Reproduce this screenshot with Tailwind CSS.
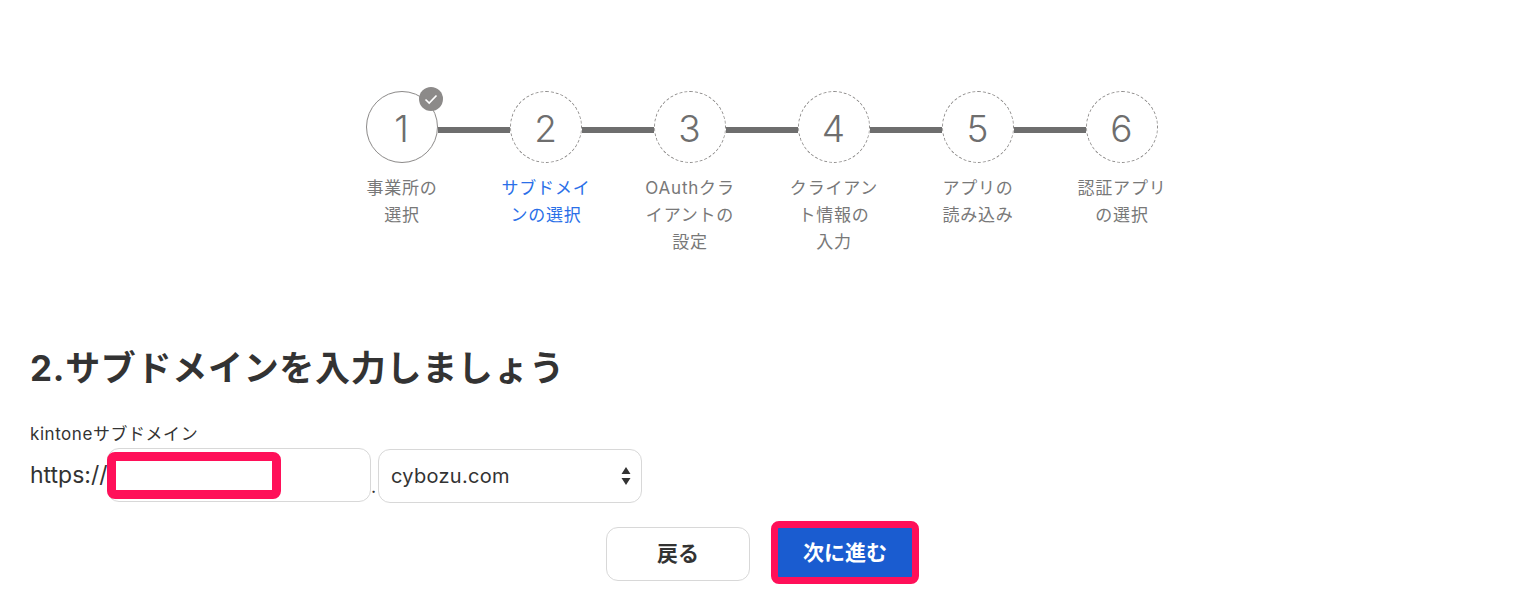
<!DOCTYPE html>
<html lang="ja">
<head>
    <meta charset="UTF-8">
    <title>サブドメインの選択</title>
    <script src="https://cdn.jsdelivr.net/npm/@tailwindcss/browser@4"></script>
</head>
<body class="bg-white h-[611px] overflow-hidden font-['Inter','Noto_Sans_CJK_JP',sans-serif]">
    <!-- ステップ -->
    <div class="pt-[91px] pl-[366px]">
        <div class="flex items-center text-[37px] text-[#6e6e6e]">
            <div class="relative w-[72px] h-[72px] pt-[4px] pr-[1px] rounded-full border border-[#8c8a89] flex items-center justify-center font-light">
                1
                <div class="absolute -top-[5px] -right-[6px] w-6 h-6 rounded-full bg-[#8c8a89] flex items-center justify-center">
                    <svg width="14" height="14" viewBox="0 0 14 14" fill="none" stroke="white" stroke-width="1.7"><path d="M1.5 7.5 5.2 11 12.5 3.5"/></svg>
                </div>
            </div>
            <div class="w-[72px] h-[6px] mt-[6px] bg-[#6e6e6e]"></div>
            <div class="w-[72px] h-[72px] pt-[4px] pr-[1px] rounded-full border border-dashed border-[#8c8a89] flex items-center justify-center font-light">2</div>
            <div class="w-[72px] h-[6px] mt-[6px] bg-[#6e6e6e]"></div>
            <div class="w-[72px] h-[72px] pt-[4px] pr-[1px] rounded-full border border-dashed border-[#8c8a89] flex items-center justify-center font-light">3</div>
            <div class="w-[72px] h-[6px] mt-[6px] bg-[#6e6e6e]"></div>
            <div class="w-[72px] h-[72px] pt-[4px] pr-[1px] rounded-full border border-dashed border-[#8c8a89] flex items-center justify-center font-light">4</div>
            <div class="w-[72px] h-[6px] mt-[6px] bg-[#6e6e6e]"></div>
            <div class="w-[72px] h-[72px] pt-[4px] pr-[1px] rounded-full border border-dashed border-[#8c8a89] flex items-center justify-center font-light">5</div>
            <div class="w-[72px] h-[6px] mt-[6px] bg-[#6e6e6e]"></div>
            <div class="w-[72px] h-[72px] pt-[4px] pr-[1px] rounded-full border border-dashed border-[#8c8a89] flex items-center justify-center font-light">6</div>
        </div>
        <div class="flex -ml-[36px] mt-[12px] text-[17px] leading-[27px] tracking-[0.8px] text-[#787878] text-center">
            <div class="w-[144px]">事業所の<br>選択</div>
            <div class="w-[144px] text-[#2a6fe8]">サブドメイ<br>ンの選択</div>
            <div class="w-[144px]">OAuthクラ<br>イアントの<br>設定</div>
            <div class="w-[144px]">クライアン<br>ト情報の<br>入力</div>
            <div class="w-[144px]">アプリの<br>読み込み</div>
            <div class="w-[144px]">認証アプリ<br>の選択</div>
        </div>
    </div>

    <div class="pl-[30px]">
        <h2 class="mt-[90px] text-[35px] leading-[44px] font-bold tracking-[0.7px] text-[#333333]">2.サブドメインを入力しましょう</h2>

        <label class="block mt-[32px] mb-[3px] text-[17px] leading-[24px] tracking-[0.55px] text-[#333333]">kintoneサブドメイン</label>
        <div class="flex items-start">
            <span class="mt-[12px] text-[23px] leading-[28px] text-[#333333] w-[77px]">https://</span>
            <div class="relative w-[264px] h-[54px] -mt-[1px] rounded-xl border border-[#d8d8d8] bg-white">
                <div class="absolute -left-[1px] top-[3px] w-[174px] h-[47px] rounded-lg border-[9px] border-[#ff1059] bg-white"></div>
            </div>
            <span class="mt-[26px] w-[7px] text-[18px] leading-[24px] text-[#333333]">.</span>
            <div class="w-[264px] h-[54px] rounded-xl border border-[#d8d8d8] flex items-center justify-between pl-[12px] pr-[10px] text-[20px] tracking-[0.3px] text-[#333333]">
                cybozu.com
                <svg width="10" height="18" viewBox="0 0 10 18" fill="#333333"><path d="M5 0 9.5 7H.5zM5 18 .5 11h9z"/></svg>
            </div>
        </div>

        <div class="flex items-start ml-[576px] mt-[18px]">
            <button class="mt-[6px] w-[144px] h-[54px] rounded-xl border border-[#d8d8d8] bg-white text-[21px] font-bold text-[#333333]">戻る</button>
            <button class="ml-[21px] w-[148px] h-[63px] rounded-lg border-[7px] border-[#ff1059] bg-[#1a5cd0] text-[21px] font-bold text-white">次に進む</button>
        </div>
    </div>
</body>
</html>
